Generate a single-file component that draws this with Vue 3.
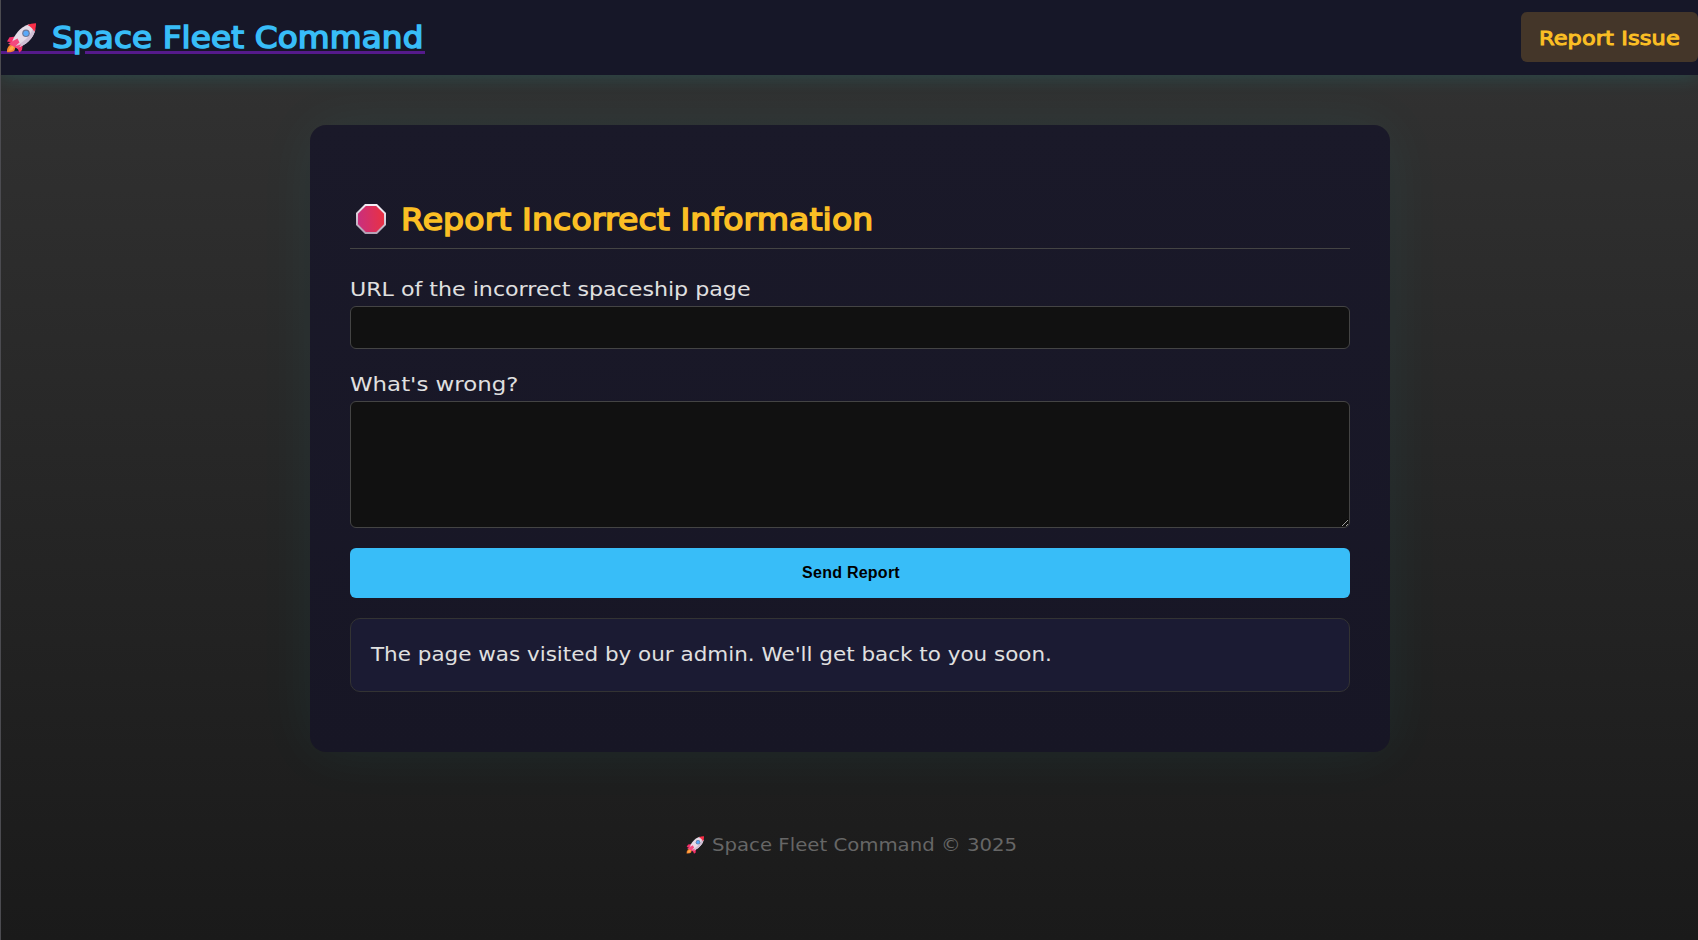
<script setup>
import { ref, h } from 'vue'

const url = ref('')
const details = ref('')
const message = "The page was visited by our admin. We'll get back to you soon."

const Rocket = () =>
  h('svg', { viewBox: '0 0 30 30', 'aria-hidden': 'true' }, [
    h('path', { d: 'M3.5 22.5 7 20.5 9.5 24 8.5 27.5Q7 29.5 1 29.3 .5 25 3.5 22.5Z', fill: '#f9852d' }),
    h('path', { d: 'M4 24.5 7 22 8 24 6.5 27 2.5 28Z', fill: '#ffab48' }),
    h('path', { d: 'M10.5 13.5 3.5 14.3 1 18.5 7 19.5Z', fill: '#f42f68' }),
    h('path', { d: 'M16.8 20.5 16 27 13.5 29.5 10.5 23.5Z', fill: '#f42f68' }),
    h('path', { d: 'M5.5 20.5C8 12 14 4 23 1.2L29.3 6.8C27.5 15.5 19.5 22.5 11 25Z', fill: '#e5dbe7' }),
    h('path', { d: 'M11 25C19.5 22.5 27.5 15.5 29.3 6.8L27 5C24 14 17 20 8.5 23Z', fill: '#d0bfd4' }),
    h('path', { d: 'M21.5 2Q25 .2 30 .3 30.2 5.2 28.3 8.8 26 4 21.5 2Z', fill: '#f92f48' }),
    h('path', { d: 'M2 20.5 11.5 15.5 13.5 19.5 9.5 23 15 21.5 12 26Z', fill: '#f5487e' }),
    h('circle', { cx: 20, cy: 10.3, r: 3.8, fill: '#6d7898' }),
    h('circle', { cx: 20, cy: 10.3, r: 2.6, fill: '#58a9fa' }),
  ])
</script>

<template>
  <div class="page">
    <header class="topbar">
      <a class="brand" href="#">
        <Rocket class="brand-icon" />
        <span class="wide brand-name">Space Fleet Command</span>
      </a>
      <a class="report-link" href="#"><span class="wide report-text">Report Issue</span></a>
    </header>

    <main class="main">
      <section class="card">
        <h2 class="title">
          <svg class="title-icon" viewBox="0 0 30 30" aria-hidden="true">
            <defs>
              <linearGradient id="sign-fill" x1="0" x2="1" y1="0.3" y2="0.2">
                <stop offset="0" stop-color="#ca2f7c" />
                <stop offset="1" stop-color="#ea3142" />
              </linearGradient>
              <linearGradient id="sign-edge" x1="0.2" x2="0.4" y1="1" y2="0">
                <stop offset="0" stop-color="#ad9bb0" />
                <stop offset="1" stop-color="#f5eff6" />
              </linearGradient>
            </defs>
            <path d="M9 0h12l9 9v12l-9 9H9l-9-9V9Z" fill="url(#sign-edge)" />
            <path d="M9.800 2h10.400L28 9.800v10.400L20.200 28H9.800L2 20.200V9.800Z" fill="url(#sign-fill)" />
          </svg>
          <span class="wide title-text">Report Incorrect Information</span>
        </h2>

        <form class="form" @submit.prevent>
          <label class="wide label label-url" for="url">URL of the incorrect spaceship page</label>
          <input id="url" v-model="url" class="field" type="text" />
          <label class="wide label label-details" for="details">What's wrong?</label>
          <textarea id="details" v-model="details" class="field area"></textarea>
          <button class="send" type="submit">Send Report</button>
        </form>

        <p class="result"><span class="wide result-text">{{ message }}</span></p>
      </section>
    </main>

    <footer class="footer">
      <Rocket class="footer-icon" />
      <span class="wide footer-text">Space Fleet Command © 3025</span>
    </footer>
  </div>
</template>

<style>
body {
  margin: 0;
  background: #1a1a1a;
}
</style>

<style scoped>
.page {
  box-sizing: border-box;
  min-height: 940px;
  border-left: 1px solid #4b4b50;
  background: linear-gradient(#333333, #1a1a1a);
  color: #e0e0e0;
  font-family: "DejaVu Sans", sans-serif;
  overflow: hidden;
}
.wide {
  display: inline-block;
  transform-origin: left center;
  white-space: nowrap;
}
.topbar {
  display: flex;
  align-items: center;
  justify-content: space-between;
  height: 75px;
  background: #161728;
  box-shadow: 0 0 20px rgba(0, 255, 255, 0.15);
}
.brand {
  position: relative;
  display: flex;
  align-items: center;
  width: 424px;
  height: 38px;
  text-decoration: none;
}
.brand::before {
  content: "";
  position: absolute;
  left: 0;
  right: 0;
  top: 32.5px;
  height: 3px;
  background: linear-gradient(90deg, #551a8b 74px, transparent 74px 84px, #551a8b 84px);
}
.brand-icon {
  position: relative;
  width: 30px;
  height: 30px;
  margin: 0 16px 0 5px;
}
.brand-name {
  position: relative;
  padding-top: 1px;
  color: #38bdf8;
  font-size: 30px;
  line-height: 38px;
  letter-spacing: 0.1px;
  transform: scaleX(1.09);
  -webkit-text-stroke: 1.5px #38bdf8;
}
.report-link {
  box-sizing: border-box;
  width: 177px;
  height: 50px;
  margin-bottom: 1px;
  padding: 15px 0 0 18px;
  border-radius: 6px;
  background: #443629;
  color: #fbbf24;
  font-size: 19.5px;
  line-height: 24px;
  text-decoration: none;
}
.report-text {
  letter-spacing: 0.1px;
  transform: scaleX(1.15);
  -webkit-text-stroke: 1px #fbbf24;
}
.main {
  display: flex;
  justify-content: center;
  padding: 50px 0 0 1px;
}
.card {
  box-sizing: border-box;
  width: 1080px;
  height: 627px;
  padding: 40px;
  border-radius: 16px;
  background: linear-gradient(#1a1929, #171625);
  box-shadow: 0 0 60px rgba(0, 255, 255, 0.055);
}
.title {
  display: flex;
  align-items: center;
  height: 38px;
  margin: 36px 0 0;
  padding-bottom: 9px;
  border-bottom: 1px solid #444444;
  color: #fbbf24;
  font-size: 30px;
  font-weight: 400;
  line-height: 38px;
}
.title-icon {
  width: 30px;
  height: 30px;
  margin: 0 15px 2px 5.5px;
}
.title-text {
  letter-spacing: 0.1px;
  transform: scaleX(1.104);
  -webkit-text-stroke: 1.5px #fbbf24;
}
.form {
  display: flex;
  flex-direction: column;
  margin: 0;
}
.label {
  align-self: flex-start;
  margin-bottom: 5px;
  font-size: 20px;
  line-height: 24px;
}
.label-url {
  margin-top: 28px;
  transform: scaleX(1.107);
}
.label-details {
  margin-top: 23px;
  transform: scaleX(1.144);
}
.field {
  box-sizing: border-box;
  width: 100%;
  height: 43px;
  padding: 12px;
  border: 1px solid #444444;
  border-radius: 6px;
  outline: none;
  background: #111111;
  color: #ffffff;
  font: 16px "Liberation Sans", Arial, sans-serif;
}
.area {
  height: 127px;
  resize: vertical;
}
.send {
  height: 50px;
  margin: 20px 0 0;
  padding: 0 0 0 2px;
  border: 0;
  border-radius: 6px;
  background: #38bdf8;
  color: #000000;
  font: bold 16px "Liberation Sans", Arial, sans-serif;
  letter-spacing: 0.25px;
}
.result {
  box-sizing: border-box;
  height: 74px;
  margin: 20px 0 0;
  padding: 23px 20px;
  border: 1px solid #333333;
  border-radius: 10px;
  background: #1b1b33;
  font-size: 20px;
  line-height: 24px;
}
.result-text {
  transform: scaleX(1.074);
}
.footer {
  display: flex;
  align-items: center;
  margin: 82px 0 0 685px;
  color: #666666;
  font-size: 18px;
  line-height: 22px;
}
.footer-icon {
  width: 18px;
  height: 18px;
  margin: 0 8px 0 0;
}
.footer-text {
  transform: scaleX(1.095);
}
</style>
